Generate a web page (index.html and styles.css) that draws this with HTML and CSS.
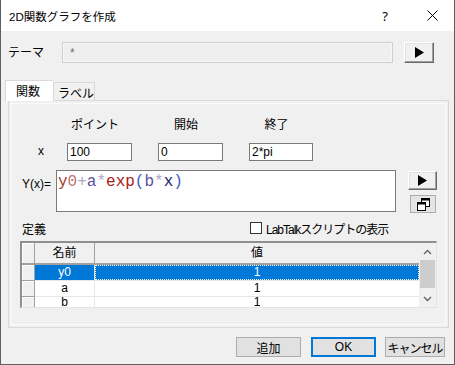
FILE: index.html
```html
<!DOCTYPE html>
<html lang="ja">

<head>
    <meta charset="UTF-8" />
    <title>2D関数グラフを作成</title>
    <link rel="stylesheet" href="styles.css">
</head>

<body>
    <div class="window">
        <div class="titlebar">
            <span class="title">2D関数グラフを作成</span>
            <span class="help">?</span>
            <svg class="close" width="11" height="11" viewBox="0 0 11 11">
                <path d="M0.5 0.5 L10.5 10.5 M10.5 0.5 L0.5 10.5" stroke="#000" stroke-width="1" fill="none" />
            </svg>
        </div>

        <div class="theme-row">
            <span class="theme-label">テーマ</span>
            <div class="theme-box">*</div>
            <button class="raised play-btn">
                <svg width="9" height="11" viewBox="0 0 9 11"><polygon points="0,0 9,5.5 0,11" fill="#000" /></svg>
            </button>
        </div>

        <div class="tabs">
            <div class="tab active">関数</div>
            <div class="tab">ラベル</div>
        </div>

        <div class="panel">
            <div class="pts">
                <span></span>
                <span class="head">ポイント</span>
                <span class="head">開始</span>
                <span class="head">終了</span>
                <span class="xlabel">x</span>
                <div class="edit">100</div>
                <div class="edit">0</div>
                <div class="edit">2*pi</div>
            </div>

            <div class="yrow">
                <span class="ylabel">Y(x)=</span>
                <div class="formula"><span class="c-y">y</span><span class="c-0">0</span><span class="c-op">+</span><span class="c-a">a</span><span class="c-op">*</span><span class="c-fn">exp</span><span class="c-par">(</span><span class="c-a">b</span><span class="c-op">*</span><span class="c-x">x</span><span class="c-par">)</span></div>
                <div class="side-btns">
                    <button class="raised side-play">
                        <svg width="9" height="11" viewBox="0 0 9 11"><polygon points="0,0 9,5.5 0,11" fill="#000" /></svg>
                    </button>
                    <button class="flat-btn">
                        <svg width="13" height="13" viewBox="0 0 13 13">
                            <rect x="4.5" y="0.5" width="8" height="8" fill="#fff" stroke="#000" />
                            <rect x="4" y="0" width="9" height="2.5" fill="#000" />
                            <rect x="0.5" y="4.5" width="8" height="8" fill="#fff" stroke="#000" />
                            <rect x="0" y="4" width="9" height="2.5" fill="#000" />
                        </svg>
                    </button>
                </div>
            </div>

            <div class="defrow">
                <span class="deflabel">定義</span>
                <span class="checkbox"></span>
                <span class="tight">LabTalkスクリプトの表示</span>
            </div>

            <div class="grid">
                <table class="params">
                    <tr class="hdr">
                        <td class="rh"></td>
                        <td class="name">名前</td>
                        <td class="val">値</td>
                    </tr>
                    <tr class="sel">
                        <td class="rh"></td>
                        <td class="name">y0</td>
                        <td class="val"><div class="focus">1</div></td>
                    </tr>
                    <tr>
                        <td class="rh"></td>
                        <td class="name">a</td>
                        <td class="val">1</td>
                    </tr>
                    <tr class="last">
                        <td class="rh"></td>
                        <td class="name">b</td>
                        <td class="val">1</td>
                    </tr>
                </table>
                <div class="vscroll">
                    <div class="arrow">
                        <svg width="9" height="6" viewBox="0 0 9 6"><path d="M1 5 L4.5 1.5 L8 5" stroke="#606060" stroke-width="1.3" fill="none" /></svg>
                    </div>
                    <div class="thumb"></div>
                    <div class="arrow down">
                        <svg width="9" height="6" viewBox="0 0 9 6"><path d="M1 1 L4.5 4.5 L8 1" stroke="#606060" stroke-width="1.3" fill="none" /></svg>
                    </div>
                </div>
            </div>
        </div>

        <div class="footer">
            <button class="btn">追加</button>
            <button class="btn ok">OK</button>
            <button class="btn cancel">キャンセル</button>
        </div>
    </div>
</body>

</html>
```

FILE: styles.css
```css
body {
    margin: 0;
    font-family: "Liberation Sans", "Noto Sans CJK JP", sans-serif;
    font-size: 12px;
    color: #000;
    background: #f0f0f0;
}

.window {
    width: 455px;
    height: 365px;
    box-sizing: border-box;
    border: 1px solid #5f5f5f;
    border-top: none;
    background: #f0f0f0;
    overflow: hidden;
}

.titlebar {
    height: 31px;
    background: #fff;
    display: flex;
    align-items: center;
    padding-left: 8px;
}

.title {
    font-size: 11.5px;
    flex: 1;
    padding-top: 1px;
}

.help {
    font-family: "Noto Sans", sans-serif;
    font-size: 13px;
    margin-right: 39px;
}

.close {
    margin-right: 16px;
}

button {
    font-family: inherit;
    font-size: 12px;
    padding: 0;
    color: #000;
    white-space: nowrap;
}

.raised {
    box-sizing: border-box;
    background: #f0f0f0;
    border: 1px solid;
    border-color: #fff #696969 #696969 #fff;
    box-shadow: inset -1px -1px 0 #a0a0a0, inset 1px 1px 0 #e3e3e3;
    display: flex;
    align-items: center;
    justify-content: center;
}

.theme-row {
    display: flex;
    align-items: center;
    margin-top: 11px;
    padding-left: 7px;
}

.theme-label {
    width: 54px;
    padding-bottom: 2px;
}

.theme-box {
    box-sizing: border-box;
    width: 331px;
    height: 21px;
    border: 1px solid #cfcfcf;
    box-shadow: inset 0 0 0 1px #f7f7f7;
    background: #efefef;
    color: #6d6d6d;
    padding: 3px 0 0 7px;
}

.play-btn {
    width: 30px;
    height: 21px;
    margin-left: 11px;
}

.tabs {
    display: flex;
    align-items: flex-end;
    margin-top: 17px;
    padding-left: 4px;
    height: 20px;
    position: relative;
    z-index: 1;
}

.tab {
    box-sizing: border-box;
    height: 18px;
    border: 1px solid #d9d9d9;
    border-bottom: none;
    background: #f0f0f0;
    padding: 1px 0 0 4px;
    width: 42px;
}

.tab.active {
    height: 21px;
    width: 48px;
    margin-bottom: -1px;
    background: #fff;
    border-right: none;
    padding: 1px 0 0 10px;
}

.panel {
    box-sizing: border-box;
    width: 441px;
    height: 228px;
    margin-left: 7px;
    border: 1px solid #d9d9d9;
    box-shadow: inset 0 0 0 2px #f0f0f0, inset 0 0 0 3px #fbfbfb;
}

.pts {
    display: grid;
    grid-template-columns: 32px 65px 65px 64px;
    grid-template-rows: 14px 18px;
    column-gap: 26px;
    row-gap: 11px;
    padding-top: 17px;
    align-items: center;
}

.head {
    text-align: center;
    padding-right: 9px;
    line-height: 14px;
}

.xlabel {
    padding-left: 29px;
    padding-bottom: 2px;
}

.edit {
    box-sizing: border-box;
    height: 18px;
    border: 1px solid #7a7a7a;
    background: #fff;
    padding: 1px 0 0 2px;
    line-height: 15px;
}

.yrow {
    display: flex;
    margin-top: 9px;
}

.ylabel {
    box-sizing: border-box;
    width: 47px;
    padding: 7px 0 0 13px;
}

.formula {
    box-sizing: border-box;
    width: 340px;
    height: 42px;
    border: 1px solid #7a7a7a;
    background: #fff;
    font-family: "Liberation Mono", monospace;
    font-size: 16px;
    line-height: 18px;
    padding: 2px 0 0 1px;
}

.c-y { color: #a33a2c; }
.c-0 { color: #c07474; }
.c-op { color: #b3a8c8; }
.c-a { color: #5a4f9e; }
.c-fn { color: #a82020; }
.c-par { color: #3a5fc0; }
.c-x { color: #26206e; }

.side-btns {
    display: flex;
    flex-direction: column;
    gap: 5px;
    margin-left: 12px;
    padding-top: 1px;
}

.side-play {
    width: 29px;
    height: 19px;
}

.flat-btn {
    box-sizing: border-box;
    width: 26px;
    height: 18px;
    margin-left: 2px;
    border: 1px solid #adadad;
    background: #e5e5e5;
    display: flex;
    align-items: center;
    justify-content: center;
}

.defrow {
    display: flex;
    align-items: center;
    height: 16px;
    margin-top: 7px;
}

.deflabel {
    box-sizing: border-box;
    width: 241px;
    padding-left: 13px;
}

.checkbox {
    box-sizing: border-box;
    width: 12px;
    height: 12px;
    border: 1px solid #333;
    background: #fff;
    margin-right: 4px;
}

.tight {
    letter-spacing: -1px;
}

.grid {
    box-sizing: border-box;
    display: flex;
    width: 417px;
    height: 67px;
    margin: 5px 0 0 11px;
    border-top: 2px solid #8f8f8f;
    border-left: 2px solid #8f8f8f;
    border-right: 1px solid #e3e3e3;
    border-bottom: 1px solid #e3e3e3;
    background: #fff;
    overflow: hidden;
}

.params {
    border-collapse: collapse;
    width: 397px;
    table-layout: fixed;
}

.params td {
    padding: 0;
    text-align: center;
    height: 15px;
    line-height: 15px;
    border-bottom: 1px solid #e6e6e6;
    border-right: 1px solid #e6e6e6;
}

.params .rh {
    width: 12px;
    background: #f0f0f0;
    border-right: 1px solid #a0a0a0;
    border-bottom: 1px solid #a0a0a0;
    box-shadow: inset 1px 1px 0 #fff;
}

.params .name {
    width: 59px;
}

.params .hdr td {
    height: 20px;
    background: #f0f0f0;
    border-right: 1px solid #a0a0a0;
    border-bottom: 2px solid #a0a0a0;
}

.params .hdr .val {
    border-right: none;
}

.params .val {
    border-right: none;
}

.params .sel .name,
.params .sel .val {
    background: #0078d7;
    color: #fff;
}

.focus {
    height: 15px;
    box-sizing: border-box;
    outline: 1px dotted #fff;
    outline-offset: -1px;
}

.params .last td {
    border-bottom: none;
    height: 11px;
    line-height: 11px;
    vertical-align: top;
}

.vscroll {
    width: 17px;
    background: #f0f0f0;
    display: flex;
    flex-direction: column;
}

.arrow {
    height: 17px;
    display: flex;
    align-items: center;
    justify-content: center;
}

.arrow.down {
    margin-top: auto;
}

.thumb {
    height: 28px;
    margin: 0 1px;
    background: #cdcdcd;
}

.footer {
    display: flex;
    justify-content: flex-end;
    margin-top: 9px;
    padding-right: 9px;
}

.btn {
    box-sizing: border-box;
    width: 65px;
    height: 20px;
    background: #e1e1e1;
    border: 1px solid #adadad;
    margin-left: 10px;
}

.btn.ok {
    border: 2px solid #0078d7;
}

.btn.cancel {
    width: 60px;
    margin-left: 9px;
    letter-spacing: -1px;
}
```
